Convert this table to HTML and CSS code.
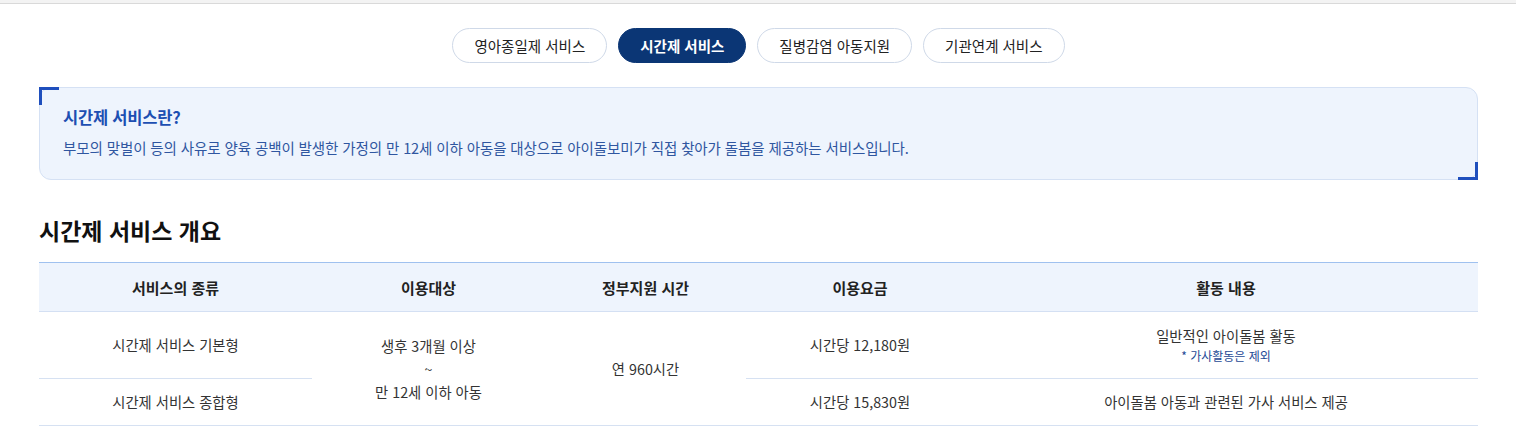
FILE: index.html
```html
<!DOCTYPE html>
<html lang="ko">
<head>
<meta charset="utf-8">
<link rel="stylesheet" href="styles.css">
</head>
<body>
<div class="topbar"></div>
<main class="page">
  <nav class="tabs">
    <a class="tab">영아종일제 서비스</a>
    <a class="tab active">시간제 서비스</a>
    <a class="tab">질병감염 아동지원</a>
    <a class="tab">기관연계 서비스</a>
  </nav>
  <section class="info">
    <span class="corner tl"></span>
    <span class="corner br"></span>
    <h2 class="info-title">시간제 서비스란?</h2>
    <p class="info-desc">부모의 맞벌이 등의 사유로 양육 공백이 발생한 가정의 만 12세 이하 아동을 대상으로 아이돌보미가 직접 찾아가 돌봄을 제공하는 서비스입니다.</p>
  </section>
  <h3 class="heading">시간제 서비스 개요</h3>
  <table class="overview">
    <colgroup>
      <col class="c1"><col class="c2"><col class="c3"><col class="c4"><col class="c5">
    </colgroup>
    <thead>
      <tr>
        <th>서비스의 종류</th>
        <th>이용대상</th>
        <th>정부지원 시간</th>
        <th>이용요금</th>
        <th>활동 내용</th>
      </tr>
    </thead>
    <tbody>
      <tr class="r1">
        <td>시간제 서비스 기본형</td>
        <td rowspan="2" class="multi">생후 3개월 이상<br>~<br>만 12세 이하 아동</td>
        <td rowspan="2">연 960시간</td>
        <td>시간당 12,180원</td>
        <td>일반적인 아이돌봄 활동<span class="note">* 가사활동은 제외</span></td>
      </tr>
      <tr class="r2">
        <td>시간제 서비스 종합형</td>
        <td>시간당 15,830원</td>
        <td>아이돌봄 아동과 관련된 가사 서비스 제공</td>
      </tr>
    </tbody>
  </table>
</main>
</body>
</html>
```

FILE: styles.css
```css
* { box-sizing: border-box; }
body {
  margin: 0;
  font-family: "Noto Sans CJK KR", "Noto Sans", sans-serif;
  color: #222;
  background: #fff;
}
.topbar {
  height: 4px;
  background: #f3f3f3;
  border-bottom: 1px solid #d9d9d9;
}
.page {
  padding: 0 38px 0 39px;
}
.tabs {
  display: flex;
  justify-content: center;
  gap: 11px;
  margin-top: 24px;
}
.tab {
  display: flex;
  align-items: center;
  height: 35px;
  padding: 0 21px;
  border: 1px solid #cfd9e8;
  border-radius: 18px;
  font-size: 14.5px;
  color: #222;
}
.tab.active {
  background: #0b3675;
  border-color: #0b3675;
  color: #fff;
  font-weight: 700;
}
.info {
  position: relative;
  margin-top: 24px;
  height: 93px;
  padding: 17px 23px 0;
  background: #eef4fd;
  border: 1px solid #d5e1f4;
  border-radius: 12px;
}
.corner {
  position: absolute;
  width: 20px;
  height: 18px;
  border-color: #1f4fbd;
  border-style: solid;
  border-width: 0;
}
.corner.tl { left: -1px; top: -1px; border-top-width: 3px; border-left-width: 3px; }
.corner.br { right: -1px; bottom: -1px; border-bottom-width: 3px; border-right-width: 3px; }
.info-title {
  margin: 0;
  font-size: 16.5px;
  line-height: 24px;
  font-weight: 700;
  color: #1d4fb2;
  letter-spacing: -0.2px;
}
.info-desc {
  margin: 9px 0 0;
  font-size: 14.5px;
  line-height: 20px;
  color: #2f56a0;
  letter-spacing: -0.1px;
}
.heading {
  margin: 35px 0 0;
  font-size: 23px;
  line-height: 30px;
  font-weight: 700;
  color: #111;
}
.overview {
  width: 100%;
  margin-top: 17px;
  border-collapse: collapse;
  table-layout: fixed;
  font-size: 14.3px;
}
.c1 { width: 273px; }
.c2 { width: 233px; }
.c3 { width: 201px; }
.c4 { width: 228px; }
.overview th {
  height: 49px;
  background: #eef4fd;
  border-top: 1px solid #9fc1ef;
  border-bottom: 1px solid #d4e0f3;
  font-weight: 700;
  font-size: 15px;
  color: #222;
  text-align: center;
  padding: 0;
}
.overview td {
  text-align: center;
  color: #333;
  border-bottom: 1px solid #d6e1f2;
  padding: 0;
  line-height: 22px;
}
.r1 td { height: 67px; }
.r2 td { height: 47px; }
.overview td.multi { line-height: 23px; }
.note {
  display: block;
  font-size: 12px;
  line-height: 18px;
  color: #1e4a95;
}
```
